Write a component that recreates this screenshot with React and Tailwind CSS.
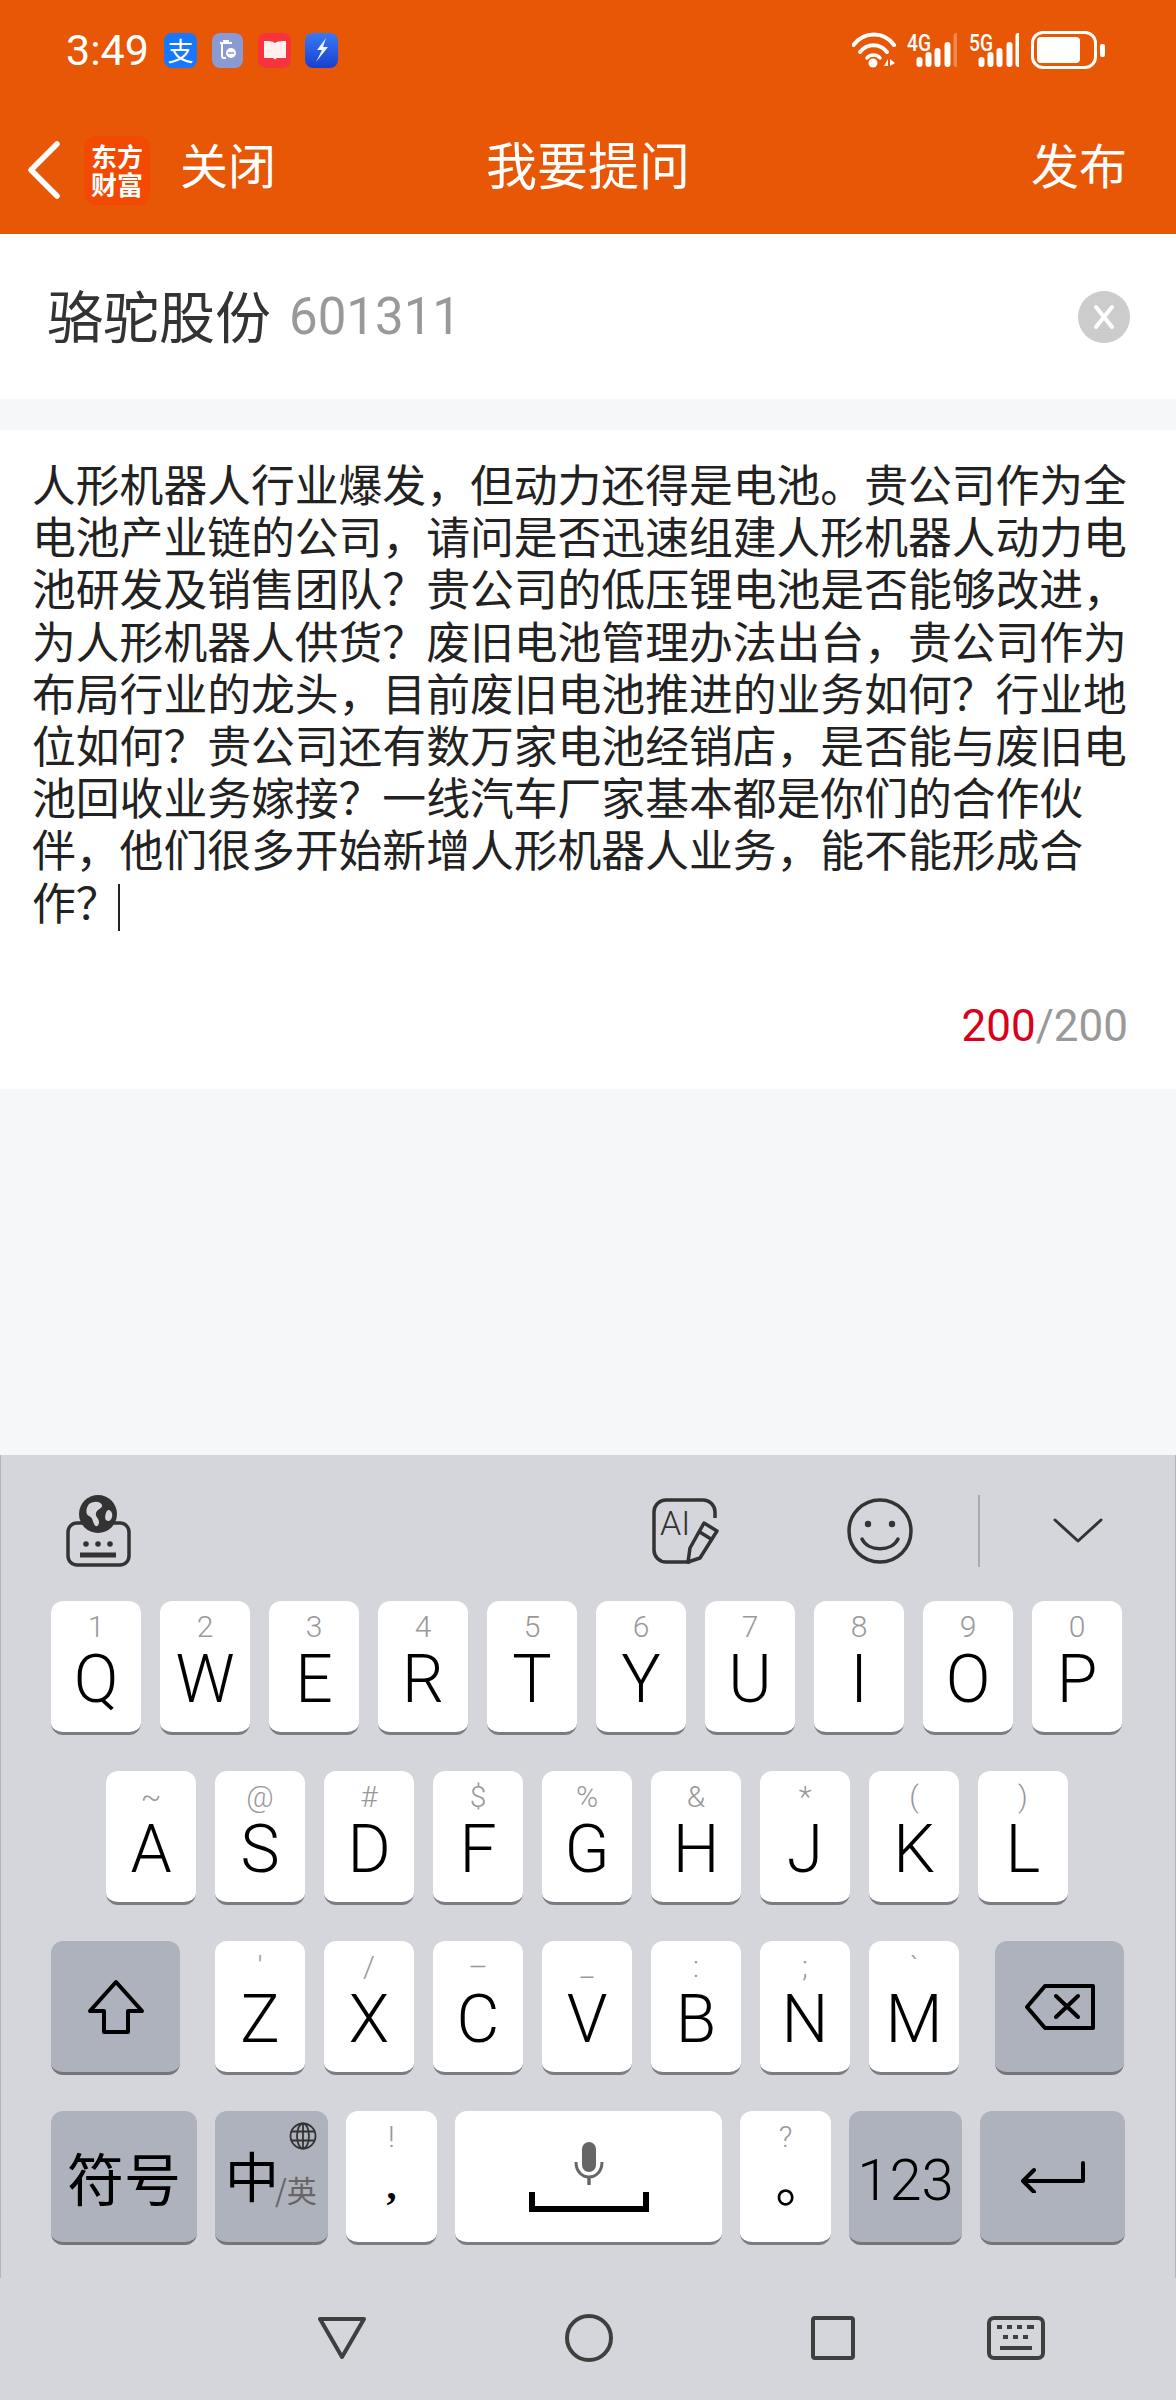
function Key({ label, ch }) {
  return (
    <div className="w-[90px] h-[134px] shrink-0 rounded-[12px] bg-white border-b-[3px] border-[#7b7c81] flex flex-col items-center pt-[11px] font-['Roboto',sans-serif]">
      <div className="h-[30px] text-[30px] leading-[30px] font-light text-[#999999]">{label}</div>
      <div className="mt-[5px] h-[66px] text-[66px] leading-[66px] font-light text-black">{ch}</div>
    </div>
  );
}

function Signal({ tag, dim }) {
  const xs = [4, 13, 22, 32, 41];
  const tops = [25, 20, 16, 10, 1];
  return (
    <svg width="50" height="45" viewBox="0 -4 50 45" fill="#fff">
      <text x="0" y="19" fontSize="23" fontWeight="500" fontFamily="Roboto" textLength="24" lengthAdjust="spacingAndGlyphs">{tag}</text>
      {xs.map((x, i) => (
        <rect key={i} x={x + 5.5} y={tops[i]} width="6" height={35 - tops[i]} rx="3" opacity={dim && i === 4 ? 0.3 : 1} />
      ))}
    </svg>
  );
}

function StatusBar() {
  return (
    <div className="h-[100px] flex items-center pl-[66px] pr-[71px] text-white">
      <span className="w-[81px] text-[43px] leading-[44px] font-['Roboto',sans-serif] font-normal">3:49</span>
      <div className="ml-[17px] w-[33px] h-[35px] rounded-[8px] bg-[#1677ff] flex items-center justify-center text-[26px] leading-[26px] text-white">支</div>
      <div className="ml-[15px] w-[31px] h-[35px] rounded-[8px] bg-[#8a9ad2] flex items-center justify-center">
        <svg width="18" height="22" viewBox="0 0 18 22" fill="none" stroke="#fff" strokeWidth="2">
          <path d="M1 4h12M5 4V2h4v2M3 4v13a2 2 0 0 0 2 2h2" />
          <circle cx="12" cy="14" r="5" fill="#fff" stroke="none" />
          <path d="M9 14h6" stroke="#8a9ad2" strokeWidth="1.6" />
        </svg>
      </div>
      <div className="ml-[15px] w-[33px] h-[35px] rounded-[8px] bg-[#f7333b] flex items-center justify-center">
        <svg width="24" height="24" viewBox="0 0 24 24" fill="#fff0ee">
          <path d="M1 3c4 0 8 0 11 2 3-2 7-2 11-2v17h-9l-2 1.5L10 20H1z" />
        </svg>
      </div>
      <div className="ml-[14px] w-[33px] h-[35px] rounded-[8px] bg-gradient-to-b from-[#3a7af5] to-[#1a3ed0] flex items-center justify-center">
        <svg width="18" height="26" viewBox="0 0 18 26" fill="#eef6ff">
          <path d="M13 1 L4 13 h5 L3 25 L15 10 h-5z" />
        </svg>
      </div>
      <div className="ml-auto flex items-center">
        <svg width="44" height="36" viewBox="0 0 44 36" fill="none" stroke="#fff" strokeWidth="4" strokeLinecap="round">
          <path d="M1.5 13 C12 -1 32 -1 42 13" />
          <path d="M8 20 C15 11 28 11 35 20" />
          <path d="M15 26 C18 22 25 22 28 26" strokeWidth="3.5" />
          <circle cx="21" cy="31" r="4.5" fill="#fff" stroke="none" />
          <path d="M36 27 l-4 7 h4z M38 27 l5 4 -5 3z" fill="#fff" stroke="none" />
        </svg>
        <div className="ml-[11px]"><Signal tag="4G" dim /></div>
        <div className="ml-[12px]"><Signal tag="5G" /></div>
        <div className="ml-[12px] w-[66px] h-[38px] rounded-[12px] border-[3px] border-white p-[3px] pr-[14px]">
          <div className="w-full h-full rounded-[4px] bg-white" />
        </div>
        <div className="ml-[3px] w-[5px] h-[13px] rounded-[2px] bg-white" />
      </div>
    </div>
  );
}

function Header() {
  return (
    <div className="h-[234px] bg-[#e75705] text-white shrink-0">
      <StatusBar />
      <div className="relative h-[134px] flex items-center pl-[27px] pr-[49px] pt-[6px]">
        <svg width="34" height="58" viewBox="0 0 34 58" fill="none" stroke="#fff" strokeWidth="5.5" strokeLinecap="round" strokeLinejoin="round">
          <path d="M30 3 L4 29 L30 55" />
        </svg>
        <div className="ml-[23px] w-[66px] h-[69px] rounded-[12px] bg-[#f24a02] flex flex-col items-center justify-center text-[26px] leading-[28px] font-bold">
          <span>东方</span>
          <span>财富</span>
        </div>
        <span className="ml-[30px] mb-[14px] text-[48px] leading-[60px]">关闭</span>
        <span className="absolute left-1/2 -translate-x-1/2 mb-[14px] text-[51px] leading-[60px]">我要提问</span>
        <span className="ml-auto mb-[14px] text-[48px] leading-[60px]">发布</span>
      </div>
    </div>
  );
}

function StockRow() {
  return (
    <div className="h-[165px] bg-white flex items-center pl-[47px] pr-[46px] shrink-0">
      <span className="mb-[5px] text-[56px] leading-[70px] text-[#333333]">骆驼股份</span>
      <span className="ml-[18px] text-[51px] leading-[70px] text-[#999999] font-['Roboto',sans-serif]">601311</span>
      <div className="ml-auto w-[52px] h-[52px] rounded-full bg-[#cccccc] flex items-center justify-center">
        <svg width="26" height="28" viewBox="0 0 26 28" stroke="#fff" strokeWidth="4" strokeLinecap="round">
          <path d="M5 4 L21 24 M21 4 L5 24" />
        </svg>
      </div>
    </div>
  );
}

function Editor() {
  return (
    <div className="h-[659px] mt-[31px] bg-white flex flex-col pl-[32px] pr-[40px] pt-[27px] shrink-0">
      <p className="text-[43.8px] leading-[52.2px] text-[#222222]">
        人形机器人行业爆发，但动力还得是电池。贵公司作为全电池产业链的公司，请问是否迅速组建人形机器人动力电池研发及销售团队？贵公司的低压锂电池是否能够改进，为人形机器人供货？废旧电池管理办法出台，贵公司作为布局行业的龙头，目前废旧电池推进的业务如何？行业地位如何？贵公司还有数万家电池经销店，是否能与废旧电池回收业务嫁接？一线汽车厂家基本都是你们的合作伙伴，他们很多开始新增人形机器人业务，能不能形成合作？
        <span className="inline-block align-middle ml-[-2px] w-[2.5px] h-[47px] bg-[#222222]" />
      </p>
      <div className="mt-auto mb-[37px] self-end pr-[8px] text-[44px] leading-[52px] font-['Roboto',sans-serif] text-[#999999]">
        <span className="text-[#d9001b]">200</span>/200
      </div>
    </div>
  );
}

function Toolbar() {
  return (
    <div className="h-[146px] flex items-center pl-[64px] pt-[5px] text-[#222222]">
      <svg width="66" height="74" viewBox="0 0 66 74" fill="none" stroke="#333" strokeWidth="3.5">
        <rect x="3" y="29" width="61" height="42" rx="9" />
        <circle cx="33" cy="20" r="19" fill="#333" stroke="none" />
        <path d="M24 10c6-4 12-2 13 1s-5 4-6 8 3 5 3 9-3 6-5 2-1-6-5-8-3-8 0-12zM43 16c3 0 5 3 4 7s-4 5-6 3 0-9 2-10z" fill="#d5d6db" stroke="none" />
        <circle cx="21" cy="50" r="2.8" fill="#333" stroke="none" />
        <circle cx="33" cy="50" r="2.8" fill="#333" stroke="none" />
        <circle cx="45" cy="50" r="2.8" fill="#333" stroke="none" />
        <path d="M15 61h36" strokeWidth="5" />
      </svg>
      <svg className="ml-[521px]" width="68" height="66" viewBox="0 0 68 66" fill="none" stroke="#333" strokeWidth="3.5" strokeLinejoin="round">
        <path d="M38 64 H14 a12 12 0 0 1-12-12 V14 a12 12 0 0 1 12-12 h37 a12 12 0 0 1 12 12 V20" />
        <text x="8" y="37" fontSize="34" fontFamily="Roboto" fontWeight="300" fill="#333" stroke="none">AI</text>
        <path d="M52 25 L65 33 L48 60 L36 64 L38 50z" fill="#d5d6db" />
        <path d="M46 33 L59 41" />
      </svg>
      <svg className="ml-[127px]" width="66" height="66" viewBox="0 0 66 66" fill="none" stroke="#333" strokeWidth="3.5" strokeLinecap="round">
        <circle cx="33" cy="33" r="31" />
        <circle cx="21" cy="26" r="3.2" fill="#333" stroke="none" />
        <circle cx="45" cy="26" r="3.2" fill="#333" stroke="none" />
        <path d="M15 41 C21 54 45 54 51 41" />
      </svg>
      <div className="ml-[65px] w-[1.5px] h-[72px] bg-[#a9aaaf]" />
      <svg className="ml-[73px]" width="50" height="25" viewBox="0 0 50 25" fill="none" stroke="#333" strokeWidth="3" strokeLinecap="round" strokeLinejoin="round">
        <path d="M2 2 L25 23 L48 2" />
      </svg>
    </div>
  );
}

function Keyboard() {
  const gray = "h-[134px] shrink-0 rounded-[12px] bg-[#aeb2bc] border-b-[3px] border-[#75767b] flex items-center justify-center text-black";
  return (
    <div className="flex-1 bg-[#d5d6db] flex flex-col">
      <div className="h-[823px] border-x border-[#b4b5ba]">
        <Toolbar />
        <div className="flex flex-col gap-[36px] pl-[50px]">
          <div className="flex gap-[19px]">
            {[["1","Q"],["2","W"],["3","E"],["4","R"],["5","T"],["6","Y"],["7","U"],["8","I"],["9","O"],["0","P"]].map(([l,c]) => <Key key={c} label={l} ch={c} />)}
          </div>
          <div className="flex gap-[19px] pl-[55px]">
            {[["~","A"],["@","S"],["#","D"],["$","F"],["%","G"],["&","H"],["*","J"],["(","K"],[")","L"]].map(([l,c]) => <Key key={c} label={l} ch={c} />)}
          </div>
          <div className="flex gap-[19px]">
            <div className={gray + " w-[129px] mr-[16px]"}>
              <svg width="58" height="56" viewBox="0 0 58 56" fill="none" stroke="#000" strokeWidth="4" strokeLinejoin="round">
                <path d="M29 3 L55 32 H41 V53 H17 V32 H3z" />
              </svg>
            </div>
            {[["'","Z"],["/","X"],["–","C"],["_","V"],[":","B"],[";","N"],["`","M"]].map(([l,c]) => <Key key={c} label={l} ch={c} />)}
            <div className={gray + " w-[129px] ml-[17px]"}>
              <svg width="70" height="46" viewBox="0 0 70 46" fill="none" stroke="#000" strokeWidth="4" strokeLinejoin="round" strokeLinecap="round">
                <path d="M20 2 H68 V44 H20 L2 23z" />
                <path d="M31 12 L53 33 M53 12 L31 33" />
              </svg>
            </div>
          </div>
          <div className="flex gap-[18px]">
            <div className={gray + " w-[146px] text-[57px]"}>符号</div>
            <div className={gray + " relative w-[113px] items-end justify-start pl-[10px] pb-[37px]"}>
              <span className="text-[54px] leading-[60px]">中</span>
              <span className="ml-[-4px] text-[30px] leading-[34px] text-[#666666] mb-[-1px]">/英</span>
              <svg className="absolute right-[11px] top-[11px]" width="28" height="28" viewBox="0 0 28 28" fill="none" stroke="#333" strokeWidth="1.8">
                <circle cx="14" cy="14" r="12.5" />
                <ellipse cx="14" cy="14" rx="6" ry="12.5" />
                <path d="M14 1.5v25M2.5 9.5h23M2.5 18.5h23" />
              </svg>
            </div>
            <div className="w-[91px] h-[134px] shrink-0 rounded-[12px] bg-white border-b-[3px] border-[#7b7c81] flex flex-col items-center pt-[11px]">
              <div className="h-[30px] text-[30px] leading-[30px] font-light text-[#999999] font-['Roboto',sans-serif]">!</div>
              <div className="mt-[14px] h-[40px] text-[40px] leading-[40px] font-bold text-black font-['Liberation_Serif',serif]">,</div>
            </div>
            <div className="w-[267px] h-[134px] shrink-0 rounded-[12px] bg-white border-b-[3px] border-[#7b7c81] flex flex-col items-center pt-[31px]">
              <svg width="30" height="44" viewBox="0 0 30 44" fill="none">
                <rect x="8" y="0" width="14" height="30" rx="7" fill="#666" />
                <path d="M2 20 C2 40 28 40 28 20" stroke="#666" strokeWidth="3" />
                <path d="M15 34 v9" stroke="#666" strokeWidth="3.5" />
              </svg>
              <svg className="mt-[6px]" width="120" height="20" viewBox="0 0 120 20" fill="none" stroke="#000" strokeWidth="6">
                <path d="M3 0 V17 H117 V0" />
              </svg>
            </div>
            <div className="w-[91px] h-[134px] shrink-0 rounded-[12px] bg-white border-b-[3px] border-[#7b7c81] flex flex-col items-center pt-[11px]">
              <div className="h-[30px] text-[30px] leading-[30px] font-light text-[#999999] font-['Roboto',sans-serif]">?</div>
              <div className="mt-[2px] h-[52px] w-[52px] text-[52px] leading-[52px] text-black translate-x-[16px]">。</div>
            </div>
            <div className={gray + " w-[113px] pt-[8px] text-[58px] font-light font-['Roboto',sans-serif]"}>123</div>
            <div className={gray + " w-[145px]"}>
              <svg width="66" height="32" viewBox="0 0 66 32" fill="none" stroke="#000" strokeWidth="4" strokeLinecap="round" strokeLinejoin="round">
                <path d="M63 2 V20 H3 M14 9 L3 20 L14 31" />
              </svg>
            </div>
          </div>
        </div>
      </div>
      <div className="flex-1 flex items-center pl-[318px] pb-[2px]">
        <svg width="48" height="44" viewBox="0 0 48 44" fill="none" stroke="#3f3f3f" strokeWidth="4" strokeLinejoin="round">
          <path d="M2 3 H46 L24 41z" />
        </svg>
        <svg className="ml-[199px]" width="48" height="48" viewBox="0 0 48 48" fill="none" stroke="#3f3f3f" strokeWidth="4">
          <circle cx="24" cy="24" r="22" />
        </svg>
        <svg className="ml-[198px]" width="44" height="44" viewBox="0 0 44 44" fill="none" stroke="#3f3f3f" strokeWidth="4" strokeLinejoin="round">
          <rect x="2" y="2" width="40" height="40" rx="2" />
        </svg>
        <svg className="ml-[132px]" width="58" height="44" viewBox="0 0 58 44" fill="none" stroke="#3f3f3f" strokeWidth="4" strokeLinejoin="round">
          <rect x="2" y="2" width="54" height="40" rx="5" />
          <path d="M10 11h5M20 11h5M30 11h5M40 11h7M16 21h5M26 21h5M36 21h5" strokeWidth="4" />
          <path d="M13 32h32" />
        </svg>
      </div>
    </div>
  );
}

export default function App() {
  return (
    <div className="w-[1176px] h-[2400px] flex flex-col bg-[#f6f7f9] font-['Noto_Sans_CJK_SC',sans-serif] overflow-hidden">
      <Header />
      <StockRow />
      <Editor />
      <div className="h-[366px] shrink-0" />
      <Keyboard />
    </div>
  );
}
